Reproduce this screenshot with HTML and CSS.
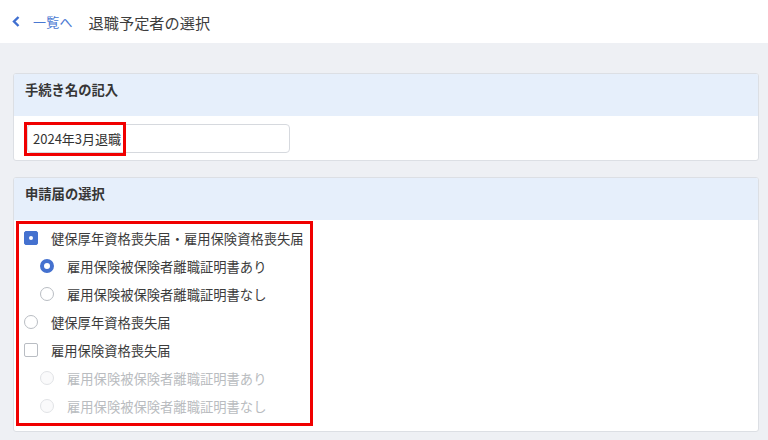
FILE: index.html
```html
<!DOCTYPE html>
<html lang="ja">
<head>
<meta charset="utf-8">
<link rel="stylesheet" href="styles.css">
</head>
<body>
<header class="topbar">
  <a class="back">
    <svg class="chev" width="8" height="11" viewBox="0 0 8 11"><path d="M6.5 1 L2 5.5 L6.5 10" fill="none" stroke="#3f6fd0" stroke-width="2.4" stroke-linejoin="miter"/></svg>
    <span class="back-label">一覧へ</span>
  </a>
  <h1 class="title">退職予定者の選択</h1>
</header>
<main class="page">
  <section class="card">
    <div class="card-head">手続き名の記入</div>
    <div class="card-body body-input">
      <div class="input-wrap">
        <div class="input">2024年3月退職</div>
        <span class="mark-input"></span>
      </div>
    </div>
  </section>
  <section class="card card2">
    <div class="card-head">申請届の選択</div>
    <div class="card-body body-list">
      <div class="highlight">
        <div class="row"><span class="box checked"></span><span class="label">健保厚年資格喪失届・雇用保険資格喪失届</span></div>
        <div class="row sub"><span class="radio checked"></span><span class="label">雇用保険被保険者離職証明書あり</span></div>
        <div class="row sub"><span class="radio"></span><span class="label">雇用保険被保険者離職証明書なし</span></div>
        <div class="row"><span class="radio"></span><span class="label">健保厚年資格喪失届</span></div>
        <div class="row"><span class="box"></span><span class="label">雇用保険資格喪失届</span></div>
        <div class="row sub disabled"><span class="radio"></span><span class="label">雇用保険被保険者離職証明書あり</span></div>
        <div class="row sub disabled"><span class="radio"></span><span class="label">雇用保険被保険者離職証明書なし</span></div>
      </div>
    </div>
  </section>
</main>
</body>
</html>
```
FILE: styles.css
```css
* { box-sizing: border-box; }
html, body { margin: 0; padding: 0; }
body {
  width: 768px;
  height: 440px;
  overflow: hidden;
  background: #eef0f4;
  font-family: "Noto Sans CJK JP", "Noto Sans", sans-serif;
  color: #3a3a3a;
}
.topbar {
  height: 43px;
  background: #ffffff;
  display: flex;
  align-items: center;
  padding-left: 12px;
}
.back {
  display: flex;
  align-items: center;
  color: #4a78d2;
  font-size: 13px;
}
.chev { margin-right: 13px; margin-top: 0px; }
.back-label { letter-spacing: 0.2px; }
.title {
  margin: 0 0 0 16px;
  font-size: 15.2px;
  font-weight: 400;
  color: #3d3d3d;
}
.page {
  padding: 30px 9px 0 13px;
  display: flex;
  flex-direction: column;
  gap: 16px;
}
.card {
  background: #ffffff;
  border: 1px solid #dcdfe4;
  border-radius: 3px;
  overflow: hidden;
}
.card-head {
  height: 42px;
  background: #e6effb;
  padding: 7px 11px;
  font-size: 13.3px;
  line-height: 18px;
  font-weight: 700;
  color: #363636;
}
.body-input {
  padding: 8px 0 7px 13px;
}
.input-wrap {
  position: relative;
  width: 263px;
}
.input {
  height: 29px;
  border: 1px solid #d6d9de;
  border-radius: 4px;
  padding: 0 5px;
  font-size: 13px;
  line-height: 27px;
  color: #333;
}
.mark-input {
  position: absolute;
  left: -3px;
  top: -2px;
  width: 102px;
  height: 34px;
  border: 3px solid #f00000;
}
.body-list {
  padding: 1px 0 5px 2px;
}
.highlight {
  width: 297px;
  border: 3px solid #f00000;
  padding: 0 0 3px 5px;
  display: flex;
  flex-direction: column;
}
.row {
  height: 28px;
  display: flex;
  align-items: center;
  gap: 13px;
  font-size: 13.3px;
  color: #3c3c3c;
}
.row.sub { padding-left: 16px; }
.row.disabled { color: #b9bcc0; }
.box, .radio {
  width: 14px;
  height: 14px;
  flex: none;
  border: 1px solid #b9bdc3;
  background: #fff;
  position: relative;
}
.box { border-radius: 2px; }
.radio { border-radius: 50%; }
.box.checked {
  background: #4471cf;
  border-color: #4471cf;
}
.box.checked::after {
  content: "";
  position: absolute;
  left: 4px; top: 4px;
  width: 4px; height: 4px;
  border-radius: 50%;
  background: #fff;
}
.radio.checked {
  background: #fff;
  border: 4.5px solid #4471cf;
}
.disabled .radio {
  border-color: #e1e3e6;
  background: #fafafb;
}
```
